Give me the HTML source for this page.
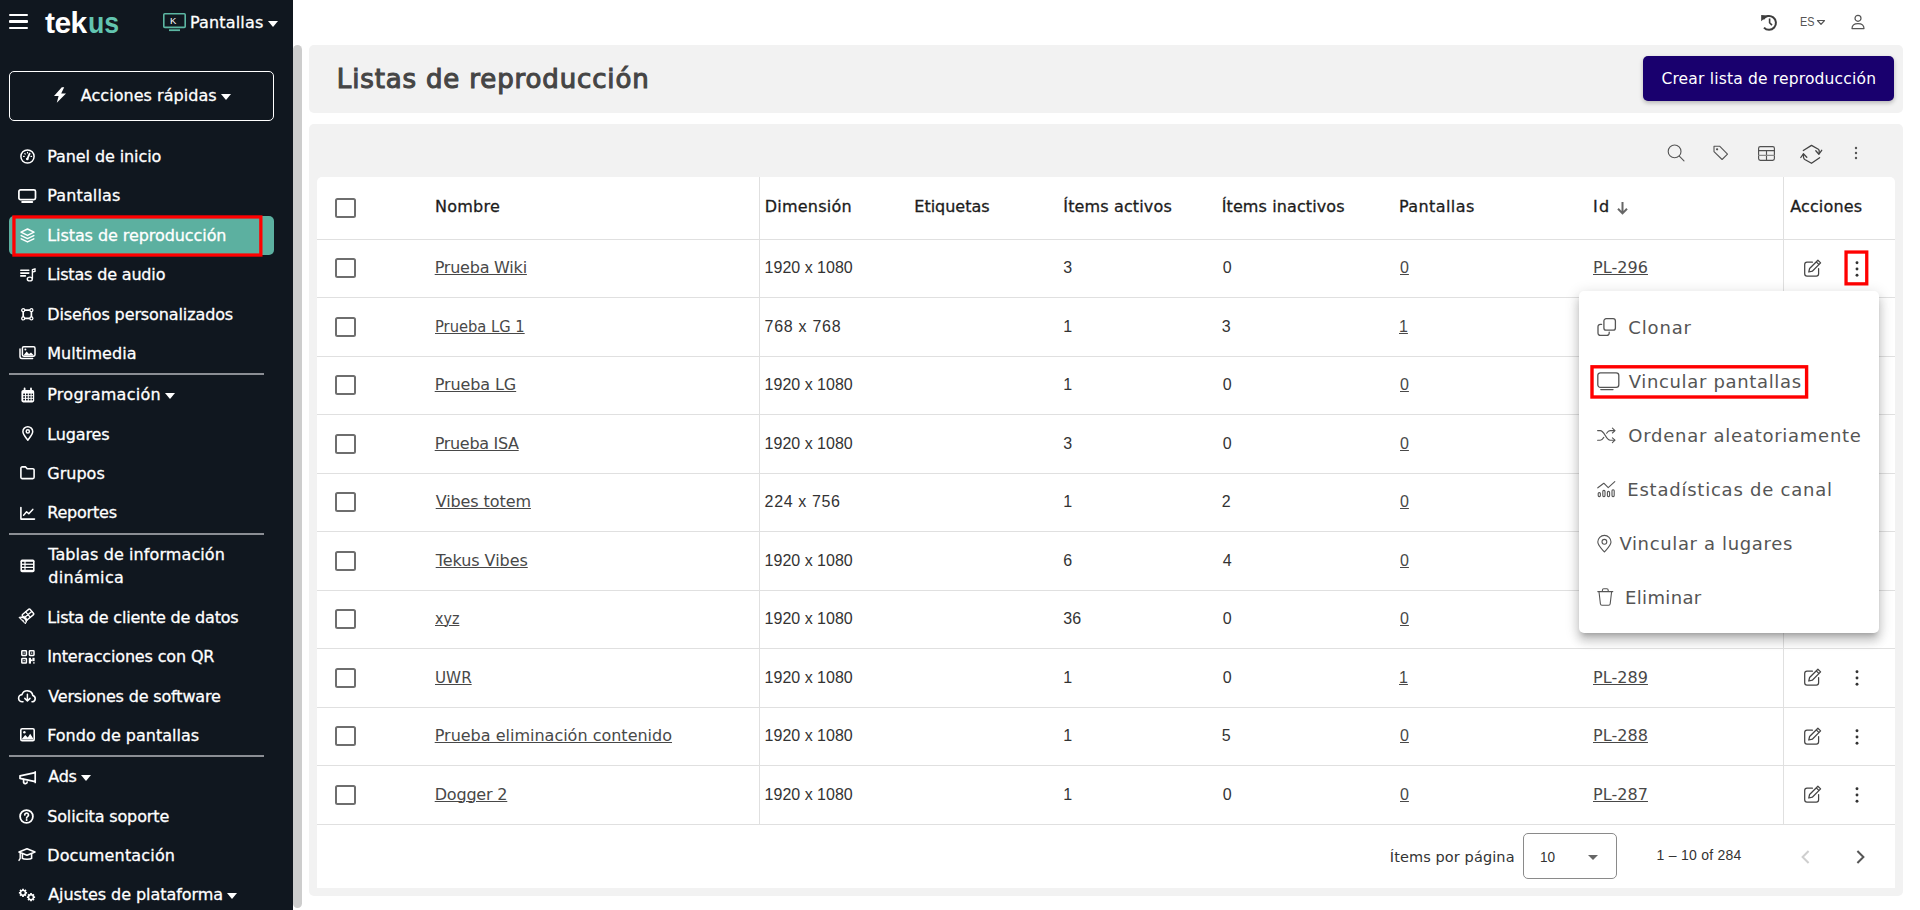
<!DOCTYPE html>
<html lang="es"><head><meta charset="utf-8"><title>Listas de reproducción</title><style>
*{box-sizing:border-box}
html,body{margin:0;padding:0}
body{width:1920px;height:910px;overflow:hidden;position:relative;background:#fff;font-family:'Liberation Sans',sans-serif}
.a{position:absolute}
.t{position:absolute;line-height:1;white-space:pre}
.u{text-decoration:underline;text-decoration-thickness:1px;text-underline-offset:1px}
.sep{position:absolute;left:9px;width:255px;height:2px;background:#8b8e94}
.hl{position:absolute;left:317px;width:1578px;height:1px;background:#e0e0e0}
.cb{position:absolute;left:335px;width:21px;height:20px;border:2px solid #6e6e6e;border-radius:2.5px;background:#fff}
svg{position:absolute;overflow:visible}
.si{fill:none;stroke:#fff;stroke-width:1.5;stroke-linecap:round;stroke-linejoin:round}
.gi{fill:none;stroke:#555;stroke-width:1.1;stroke-linecap:round;stroke-linejoin:round}
</style></head><body>
<div class="a" style="left:0;top:0;width:293px;height:910px;background:#10171f"></div>
<div class="a" style="left:293px;top:45px;width:9px;height:863px;background:#cdcdcd;border-radius:4.5px"></div>
<div class="a" style="left:9px;top:13.6px;width:19px;height:2.4px;background:#fff;border-radius:1px"></div>
<div class="a" style="left:9px;top:20.4px;width:19px;height:2.4px;background:#fff;border-radius:1px"></div>
<div class="a" style="left:9px;top:27.0px;width:19px;height:2.4px;background:#fff;border-radius:1px"></div>
<span class="t" style="left:45.0px;top:8.3px;font-family:'Liberation Sans',sans-serif;font-size:30px;color:#ffffff;font-weight:bold;letter-spacing:-0.55px;">tek</span>
<span class="t" style="left:88px;top:7.6px;font-family:'Liberation Sans',sans-serif;font-weight:bold;font-size:30px;color:#62c5b0;transform:scaleX(.89);transform-origin:0 0">us</span>
<span class="t" style="left:170.0px;top:15.5px;font-family:'Liberation Sans',sans-serif;font-size:9.5px;color:#ffffff;">K</span>
<svg style="left:163px;top:12.5px;fill:none;stroke:#5cb6a2;stroke-width:1.6" width="23" height="18" viewBox="0 0 23 18"><rect x=".8" y=".8" width="21.4" height="13.6" rx="1"/><path d="M6 17.2h11" stroke-width="1.8"/></svg>
<div class="a" style="left:267.6px;top:20.8px;width:0;height:0;border-left:5.2px solid transparent;border-right:5.2px solid transparent;border-top:6px solid #fff"></div>
<div class="a" style="left:9px;top:71px;width:265px;height:50px;border:1px solid #fff;border-radius:5px"></div>
<svg style="left:53px;top:87px;fill:#fff" width="14" height="16" viewBox="0 0 14 16"><path d="M8.800.2 1 9h4.600L3.800 15.800 13 6.600H8.200L11.200.2z"/></svg>
<div class="a" style="left:221.4px;top:93.6px;width:0;height:0;border-left:5.2px solid transparent;border-right:5.2px solid transparent;border-top:6px solid #fff"></div>
<div class="a" style="left:164.8px;top:393.1px;width:0;height:0;border-left:5.2px solid transparent;border-right:5.2px solid transparent;border-top:6px solid #fff"></div>
<div class="a" style="left:81.3px;top:775px;width:0;height:0;border-left:5.2px solid transparent;border-right:5.2px solid transparent;border-top:6px solid #fff"></div>
<div class="a" style="left:227px;top:892.7px;width:0;height:0;border-left:5.2px solid transparent;border-right:5.2px solid transparent;border-top:6px solid #fff"></div>
<div class="a" style="left:9px;top:215.5px;width:265px;height:39.5px;background:#5cb0a0;border-radius:5px"></div>
<svg style="left:0;top:0;pointer-events:none" width="1920" height="910"><rect x="13.95" y="216.95" width="246.90" height="38.10" fill="none" stroke="#ff0000" stroke-width="3.3"/></svg>
<div class="sep" style="top:373px"></div>
<div class="sep" style="top:533px"></div>
<div class="sep" style="top:755px"></div>
<svg class="si" style="left:19.5px;top:148.5px;" width="15" height="15" viewBox="0 0 15 15"><circle cx="7.5" cy="7.5" r="6.600"/><path d="M7.400 9.800 9.600 4.600" stroke-width="1.800"/><circle cx="7.300" cy="10" r="1.300" fill="#fff" stroke="none"/><path d="M3.600 7.400h.6M4.800 4.600l.4.400M7.500 3.400v.6M11 7.400h.6" stroke-width="1.200"/></svg>
<svg class="si" style="left:18px;top:189px;" width="19" height="14" viewBox="0 0 19 14"><rect x=".9" y=".9" width="16.600" height="9.800" rx="1.600" stroke-width="1.700"/><path d="M4.200 13h10" stroke-width="2"/></svg>
<svg class="si" style="left:19.5px;top:228px;" width="15" height="15" viewBox="0 0 15 15"><path d="M7.500 1 14 4.200 7.500 7.400 1 4.200z"/><path d="M1.200 7.600 7.500 10.700 13.800 7.600M1.200 10.800 7.500 13.900 13.800 10.800"/></svg>
<svg class="si" style="left:19.5px;top:268px;" width="16" height="14" viewBox="0 0 16 14"><path d="M.8 2.300h8M.8 5.100h8M.8 7.900h4.600" stroke-width="1.600"/><path d="M12.400 10.600V1.600l2.600-.8v2.600l-2.600.8" stroke-width="1.400"/><ellipse cx="9.800" cy="11" rx="2.500" ry="1.900" stroke-width="1.400"/></svg>
<svg class="si" style="left:21px;top:307.6px;" width="13" height="13" viewBox="0 0 13 13"><rect x="2.200" y="2.200" width="8.200" height="8.200" stroke-width="1.700"/><circle cx="2.200" cy="2.200" r="1.500" fill="#10171f" stroke-width="1.300"/><circle cx="10.400" cy="2.200" r="1.500" fill="#10171f" stroke-width="1.300"/><circle cx="2.200" cy="10.400" r="1.500" fill="#10171f" stroke-width="1.300"/><circle cx="10.400" cy="10.400" r="1.500" fill="#10171f" stroke-width="1.300"/></svg>
<svg class="si" style="left:19px;top:346px;" width="17" height="14" viewBox="0 0 17 14"><rect x="3.400" y=".8" width="12.600" height="9.400" rx="1.400"/><path d="M1 3v7.600a1.800 1.800 0 0 0 1.800 1.800h10.800"/><path d="M4.400 9.400 7.600 5.600l2.400 2.400 2-1.600 3 3z" fill="#fff" stroke="none"/><circle cx="6.400" cy="3.600" r="1" fill="#fff" stroke="none"/></svg>
<svg class="si" style="left:20.5px;top:387.5px;" width="14" height="15" viewBox="0 0 14 15"><path d="M3.600.4v2.400M10 .4v2.400" stroke-width="1.800"/><rect x=".4" y="2" width="12.800" height="12.400" rx="1.800" fill="#fff" stroke="none"/><g fill="#10171f" stroke="none"><rect x="2.200" y="5.600" width="1.800" height="1.600"/><rect x="5" y="5.600" width="1.800" height="1.600"/><rect x="7.800" y="5.600" width="1.800" height="1.600"/><rect x="10.600" y="5.600" width="1.400" height="1.600"/><rect x="2.200" y="8.200" width="1.800" height="1.600"/><rect x="5" y="8.200" width="1.800" height="1.600"/><rect x="7.800" y="8.200" width="1.800" height="1.600"/><rect x="10.600" y="8.200" width="1.400" height="1.600"/><rect x="2.200" y="10.800" width="1.800" height="1.600"/><rect x="5" y="10.800" width="1.800" height="1.600"/><rect x="7.800" y="10.800" width="1.800" height="1.600"/><rect x="10.600" y="10.800" width="1.400" height="1.600"/></g></svg>
<svg class="si" style="left:21.5px;top:426.3px;" width="12" height="15" viewBox="0 0 12 15"><path d="M5.800 14.200C4 11.800.9 8.600.9 5.600a4.900 4.900 0 0 1 9.800 0c0 3-3.100 6.200-4.900 8.600z"/><circle cx="5.800" cy="5.400" r="1.600"/></svg>
<svg class="si" style="left:19.5px;top:465.8px;" width="15" height="14" viewBox="0 0 15 14"><path d="M.9 2.200A1.300 1.300 0 0 1 2.200.9h3.400l1.600 1.900h5.600a1.300 1.300 0 0 1 1.300 1.300v7.200a1.300 1.300 0 0 1-1.300 1.300H2.200A1.300 1.300 0 0 1 .9 11.300z" stroke-width="1.600"/></svg>
<svg class="si" style="left:19.5px;top:506.5px;" width="15" height="13" viewBox="0 0 15 13"><path d="M.9.600v11.500h13.600" stroke-width="1.600"/><path d="M3.600 8.200 6.600 4.800l2.200 2 4-4.400" stroke-width="1.500"/></svg>
<svg class="si" style="left:19.5px;top:558.8px;" width="15" height="14" viewBox="0 0 15 14"><rect x=".4" y=".4" width="14.200" height="12.800" rx="1.800" fill="#fff" stroke="none"/><g fill="#10171f" stroke="none"><rect x="2" y="2.800" width="2.400" height="1.800"/><rect x="5.600" y="2.800" width="7.400" height="1.800"/><rect x="2" y="5.900" width="2.400" height="1.800"/><rect x="5.600" y="5.900" width="7.400" height="1.800"/><rect x="2" y="9" width="2.400" height="1.800"/><rect x="5.600" y="9" width="7.400" height="1.800"/></g></svg>
<svg class="si" style="left:18.2px;top:608.7px;" width="16" height="16" viewBox="0 0 16 16"><g transform="rotate(-40 10 5.600)"><rect x="5" y="2" width="10" height="7.200" rx=".8" stroke-width="1.400"/><path d="M10 2v7.200M5 5.600h10" stroke-width="1.300"/></g><path d="M6.200 7.400 1 8.400 7.400 14.800 9.400 10.600z" fill="#fff" stroke-width="1"/><path d="M3.800 9.600Q6.600 10.200 7 12.800" stroke="#10171f" stroke-width="1.200"/></svg>
<svg class="si" style="left:20.5px;top:649.5px;" width="14" height="14" viewBox="0 0 14 14"><rect x=".8" y=".8" width="4.600" height="4.600" rx=".6"/><rect x="8.400" y=".8" width="4.600" height="4.600" rx=".6"/><rect x=".8" y="8.400" width="4.600" height="4.600" rx=".6"/><g fill="#fff" stroke="none"><rect x="2.500" y="2.500" width="1.200" height="1.200"/><rect x="10.100" y="2.500" width="1.200" height="1.200"/><rect x="2.500" y="10.100" width="1.200" height="1.200"/><rect x="7.800" y="7.800" width="2.200" height="5.800"/><rect x="11.400" y="7.800" width="2.200" height="3.400"/><rect x="10" y="9.400" width="1.400" height="1.800"/><rect x="12.200" y="12.200" width="1.400" height="1.400"/></g></svg>
<svg class="si" style="left:17.8px;top:688.6px;" width="19" height="14" viewBox="0 0 19 14"><path d="M5 12.800h-.6a3.600 3.600 0 0 1-.4-7.200 5.600 5.600 0 0 1 10.800.8 3.300 3.300 0 0 1-.2 6.400H14" stroke-width="1.600"/><path d="M9.400 5.200v6.600M6.800 9.400l2.600 2.600 2.600-2.600" stroke-width="1.500"/></svg>
<svg class="si" style="left:19.5px;top:727.8px;" width="15" height="14" viewBox="0 0 15 14"><rect x=".8" y=".8" width="13.400" height="11.800" rx="1.400" stroke-width="1.600"/><path d="M1.400 11.600 5.200 7l2.600 2.400 2.400-3.600 3.600 5.800z" fill="#fff" stroke="none"/><circle cx="4.400" cy="4.200" r="1.200" fill="#fff" stroke="none"/></svg>
<svg class="si" style="left:18.8px;top:770.5px;" width="18" height="13" viewBox="0 0 18 13"><path d="M16.200.800v10.600M16.200 1.600 1 4.800v2.600l15.200 3.200" stroke-width="1.700"/><path d="M4.600 8.400v2.200a1.800 1.800 0 0 0 3.600.400" stroke-width="1.700"/></svg>
<svg class="si" style="left:19.3px;top:808.8px;" width="15" height="15" viewBox="0 0 15 15"><circle cx="7.500" cy="7.500" r="6.400" stroke-width="1.800"/><path d="M5.700 6a1.900 1.900 0 1 1 2.800 1.600c-.6.400-.9.700-.9 1.400" stroke-width="1.700"/><circle cx="7.600" cy="10.900" r="1" fill="#fff" stroke="none"/></svg>
<svg class="si" style="left:18px;top:848.3px;" width="18" height="13" viewBox="0 0 18 13"><path d="M9 .800 17 4 9 7.200 1 4z" stroke-width="1.600"/><path d="M4.400 5.800v4.600c1.400 1.200 7.800 1.200 9.200 0V5.800" stroke-width="1.600"/><path d="M2.200 4.800v5.600L1 12.400" stroke-width="1.400"/></svg>
<svg class="si" style="left:18px;top:888.4px;" width="18" height="14" viewBox="0 0 18 14"><circle cx="5" cy="4.8" r="2.4" stroke-width="1.400"/><path d="M7.40 4.80L9.10 4.80" stroke-width="1.800" stroke-linecap="butt"/><path d="M6.70 6.50L7.90 7.70" stroke-width="1.800" stroke-linecap="butt"/><path d="M5.00 7.20L5.00 8.90" stroke-width="1.800" stroke-linecap="butt"/><path d="M3.30 6.50L2.10 7.70" stroke-width="1.800" stroke-linecap="butt"/><path d="M2.60 4.80L0.90 4.80" stroke-width="1.800" stroke-linecap="butt"/><path d="M3.30 3.10L2.10 1.90" stroke-width="1.800" stroke-linecap="butt"/><path d="M5.00 2.40L5.00 0.70" stroke-width="1.800" stroke-linecap="butt"/><path d="M6.70 3.10L7.90 1.90" stroke-width="1.800" stroke-linecap="butt"/><circle cx="13" cy="9.2" r="2.4" stroke-width="1.400"/><path d="M15.40 9.20L17.10 9.20" stroke-width="1.800" stroke-linecap="butt"/><path d="M14.70 10.90L15.90 12.10" stroke-width="1.800" stroke-linecap="butt"/><path d="M13.00 11.60L13.00 13.30" stroke-width="1.800" stroke-linecap="butt"/><path d="M11.30 10.90L10.10 12.10" stroke-width="1.800" stroke-linecap="butt"/><path d="M10.60 9.20L8.90 9.20" stroke-width="1.800" stroke-linecap="butt"/><path d="M11.30 7.50L10.10 6.30" stroke-width="1.800" stroke-linecap="butt"/><path d="M13.00 6.80L13.00 5.10" stroke-width="1.800" stroke-linecap="butt"/><path d="M14.70 7.50L15.90 6.30" stroke-width="1.800" stroke-linecap="butt"/></svg>
<span class="t" style="left:190.0px;top:15.1px;font-family:'DejaVu Sans','Liberation Sans',sans-serif;font-size:16px;color:#ffffff;letter-spacing:0.16px;-webkit-text-stroke:0.3px #ffffff;">Pantallas</span><span class="t" style="left:80.8px;top:87.8px;font-family:'DejaVu Sans','Liberation Sans',sans-serif;font-size:16px;color:#ffffff;letter-spacing:0.04px;-webkit-text-stroke:0.3px #ffffff;">Acciones rápidas</span><span class="t" style="left:47.2px;top:149.0px;font-family:'DejaVu Sans','Liberation Sans',sans-serif;font-size:16px;color:#ffffff;letter-spacing:-0.09px;-webkit-text-stroke:0.3px #ffffff;">Panel de inicio</span><span class="t" style="left:47.2px;top:188.0px;font-family:'DejaVu Sans','Liberation Sans',sans-serif;font-size:16px;color:#ffffff;letter-spacing:0.14px;-webkit-text-stroke:0.3px #ffffff;">Pantallas</span><span class="t" style="left:47.2px;top:228.0px;font-family:'DejaVu Sans','Liberation Sans',sans-serif;font-size:16px;color:#ffffff;letter-spacing:-0.07px;-webkit-text-stroke:0.3px #ffffff;">Listas de reproducción</span><span class="t" style="left:47.2px;top:267.0px;font-family:'DejaVu Sans','Liberation Sans',sans-serif;font-size:16px;color:#ffffff;letter-spacing:-0.17px;-webkit-text-stroke:0.3px #ffffff;">Listas de audio</span><span class="t" style="left:47.2px;top:306.8px;font-family:'DejaVu Sans','Liberation Sans',sans-serif;font-size:16px;color:#ffffff;letter-spacing:-0.11px;-webkit-text-stroke:0.3px #ffffff;">Diseños personalizados</span><span class="t" style="left:47.2px;top:345.9px;font-family:'DejaVu Sans','Liberation Sans',sans-serif;font-size:16px;color:#ffffff;letter-spacing:0.04px;-webkit-text-stroke:0.3px #ffffff;">Multimedia</span><span class="t" style="left:47.2px;top:387.0px;font-family:'DejaVu Sans','Liberation Sans',sans-serif;font-size:16px;color:#ffffff;letter-spacing:0.27px;-webkit-text-stroke:0.3px #ffffff;">Programación</span><span class="t" style="left:47.2px;top:426.6px;font-family:'DejaVu Sans','Liberation Sans',sans-serif;font-size:16px;color:#ffffff;letter-spacing:-0.13px;-webkit-text-stroke:0.3px #ffffff;">Lugares</span><span class="t" style="left:47.2px;top:465.9px;font-family:'DejaVu Sans','Liberation Sans',sans-serif;font-size:16px;color:#ffffff;letter-spacing:0.04px;-webkit-text-stroke:0.3px #ffffff;">Grupos</span><span class="t" style="left:47.2px;top:505.4px;font-family:'DejaVu Sans','Liberation Sans',sans-serif;font-size:16px;color:#ffffff;letter-spacing:-0.19px;-webkit-text-stroke:0.3px #ffffff;">Reportes</span><span class="t" style="left:48.2px;top:546.5px;font-family:'DejaVu Sans','Liberation Sans',sans-serif;font-size:16px;color:#ffffff;letter-spacing:0.10px;-webkit-text-stroke:0.3px #ffffff;">Tablas de información</span><span class="t" style="left:48.2px;top:569.5px;font-family:'DejaVu Sans','Liberation Sans',sans-serif;font-size:16px;color:#ffffff;letter-spacing:0.36px;-webkit-text-stroke:0.3px #ffffff;">dinámica</span><span class="t" style="left:47.2px;top:610.0px;font-family:'DejaVu Sans','Liberation Sans',sans-serif;font-size:16px;color:#ffffff;letter-spacing:-0.20px;-webkit-text-stroke:0.3px #ffffff;">Lista de cliente de datos</span><span class="t" style="left:47.2px;top:649.2px;font-family:'DejaVu Sans','Liberation Sans',sans-serif;font-size:16px;color:#ffffff;letter-spacing:-0.15px;-webkit-text-stroke:0.3px #ffffff;">Interacciones con QR</span><span class="t" style="left:48.2px;top:689.0px;font-family:'DejaVu Sans','Liberation Sans',sans-serif;font-size:16px;color:#ffffff;letter-spacing:-0.16px;-webkit-text-stroke:0.3px #ffffff;">Versiones de software</span><span class="t" style="left:47.2px;top:728.1px;font-family:'DejaVu Sans','Liberation Sans',sans-serif;font-size:16px;color:#ffffff;-webkit-text-stroke:0.3px #ffffff;">Fondo de pantallas</span><span class="t" style="left:48.2px;top:769.0px;font-family:'DejaVu Sans','Liberation Sans',sans-serif;font-size:16px;color:#ffffff;letter-spacing:-0.20px;-webkit-text-stroke:0.3px #ffffff;">Ads</span><span class="t" style="left:47.2px;top:808.7px;font-family:'DejaVu Sans','Liberation Sans',sans-serif;font-size:16px;color:#ffffff;letter-spacing:-0.13px;-webkit-text-stroke:0.3px #ffffff;">Solicita soporte</span><span class="t" style="left:47.2px;top:847.8px;font-family:'DejaVu Sans','Liberation Sans',sans-serif;font-size:16px;color:#ffffff;letter-spacing:0.16px;-webkit-text-stroke:0.3px #ffffff;">Documentación</span><span class="t" style="left:48.2px;top:887.0px;font-family:'DejaVu Sans','Liberation Sans',sans-serif;font-size:16px;color:#ffffff;letter-spacing:-0.06px;-webkit-text-stroke:0.3px #ffffff;">Ajustes de plataforma</span>
<div class="a" style="left:309px;top:45px;width:1594px;height:68px;background:#f2f2f2;border-radius:5px"></div>
<div class="a" style="left:309px;top:124px;width:1594px;height:772px;background:#f2f2f2;border-radius:5px"></div>
<div class="a" style="left:317px;top:177px;width:1578px;height:711px;background:#fff;border-radius:5px 5px 0 0"></div>
<div class="a" style="left:1643px;top:56px;width:251px;height:45px;background:#19006e;border-radius:5px;box-shadow:0 2px 4px rgba(0,0,0,.25)"></div>
<div class="hl" style="top:239px"></div>
<div class="hl" style="top:297px"></div>
<div class="hl" style="top:356px"></div>
<div class="hl" style="top:414px"></div>
<div class="hl" style="top:473px"></div>
<div class="hl" style="top:531px"></div>
<div class="hl" style="top:590px"></div>
<div class="hl" style="top:648px"></div>
<div class="hl" style="top:707px"></div>
<div class="hl" style="top:765px"></div>
<div class="hl" style="top:824px"></div>
<div class="a" style="left:759px;top:177px;width:1px;height:648px;background:#e0e0e0"></div>
<div class="a" style="left:1783px;top:177px;width:1px;height:648px;background:#e0e0e0"></div>
<div class="cb" style="top:198px"></div>
<div class="cb" style="top:258.0px"></div>
<div class="cb" style="top:316.5px"></div>
<div class="cb" style="top:375.0px"></div>
<div class="cb" style="top:433.5px"></div>
<div class="cb" style="top:492.0px"></div>
<div class="cb" style="top:550.5px"></div>
<div class="cb" style="top:609.0px"></div>
<div class="cb" style="top:667.5px"></div>
<div class="cb" style="top:726.0px"></div>
<div class="cb" style="top:784.5px"></div>
<svg class="gi" style="left:1803.5px;top:258.8px;stroke-width:1.25;stroke:#444" width="18" height="18" viewBox="0 0 18 18"><path d="M8.4 3.2H3a2.300 2.300 0 0 0-2.300 2.300v9.300A2.300 2.300 0 0 0 3 17.100h9.300a2.300 2.300 0 0 0 2.300-2.300V9.600"/><path d="M13.900 1.200l2.700 2.700-8.300 8.300-3.500.8.800-3.500zM12.300 2.900l2.700 2.700"/></svg>
<svg style="left:1853.9px;top:258.5px;fill:#333" width="6" height="20" viewBox="0 0 6 20"><circle cx="3" cy="3.8" r="1.45"/><circle cx="3" cy="10" r="1.45"/><circle cx="3" cy="16.2" r="1.45"/></svg>
<svg class="gi" style="left:1803.5px;top:317.3px;stroke-width:1.25;stroke:#444" width="18" height="18" viewBox="0 0 18 18"><path d="M8.4 3.2H3a2.300 2.300 0 0 0-2.300 2.300v9.300A2.300 2.300 0 0 0 3 17.100h9.300a2.300 2.300 0 0 0 2.300-2.300V9.600"/><path d="M13.900 1.200l2.700 2.700-8.300 8.300-3.500.8.800-3.500zM12.300 2.900l2.700 2.700"/></svg>
<svg style="left:1853.9px;top:317.0px;fill:#333" width="6" height="20" viewBox="0 0 6 20"><circle cx="3" cy="3.8" r="1.45"/><circle cx="3" cy="10" r="1.45"/><circle cx="3" cy="16.2" r="1.45"/></svg>
<svg class="gi" style="left:1803.5px;top:375.8px;stroke-width:1.25;stroke:#444" width="18" height="18" viewBox="0 0 18 18"><path d="M8.4 3.2H3a2.300 2.300 0 0 0-2.300 2.300v9.300A2.300 2.300 0 0 0 3 17.100h9.300a2.300 2.300 0 0 0 2.300-2.300V9.600"/><path d="M13.900 1.200l2.700 2.700-8.300 8.300-3.500.8.800-3.500zM12.300 2.900l2.700 2.700"/></svg>
<svg style="left:1853.9px;top:375.5px;fill:#333" width="6" height="20" viewBox="0 0 6 20"><circle cx="3" cy="3.8" r="1.45"/><circle cx="3" cy="10" r="1.45"/><circle cx="3" cy="16.2" r="1.45"/></svg>
<svg class="gi" style="left:1803.5px;top:434.3px;stroke-width:1.25;stroke:#444" width="18" height="18" viewBox="0 0 18 18"><path d="M8.4 3.2H3a2.300 2.300 0 0 0-2.300 2.300v9.300A2.300 2.300 0 0 0 3 17.100h9.300a2.300 2.300 0 0 0 2.300-2.300V9.600"/><path d="M13.900 1.200l2.700 2.700-8.300 8.300-3.500.8.800-3.500zM12.300 2.900l2.700 2.700"/></svg>
<svg style="left:1853.9px;top:434.0px;fill:#333" width="6" height="20" viewBox="0 0 6 20"><circle cx="3" cy="3.8" r="1.45"/><circle cx="3" cy="10" r="1.45"/><circle cx="3" cy="16.2" r="1.45"/></svg>
<svg class="gi" style="left:1803.5px;top:492.8px;stroke-width:1.25;stroke:#444" width="18" height="18" viewBox="0 0 18 18"><path d="M8.4 3.2H3a2.300 2.300 0 0 0-2.300 2.300v9.300A2.300 2.300 0 0 0 3 17.100h9.300a2.300 2.300 0 0 0 2.300-2.300V9.600"/><path d="M13.900 1.200l2.700 2.700-8.300 8.300-3.500.8.800-3.500zM12.300 2.900l2.700 2.700"/></svg>
<svg style="left:1853.9px;top:492.5px;fill:#333" width="6" height="20" viewBox="0 0 6 20"><circle cx="3" cy="3.8" r="1.45"/><circle cx="3" cy="10" r="1.45"/><circle cx="3" cy="16.2" r="1.45"/></svg>
<svg class="gi" style="left:1803.5px;top:551.3px;stroke-width:1.25;stroke:#444" width="18" height="18" viewBox="0 0 18 18"><path d="M8.4 3.2H3a2.300 2.300 0 0 0-2.300 2.300v9.300A2.300 2.300 0 0 0 3 17.100h9.300a2.300 2.300 0 0 0 2.300-2.300V9.600"/><path d="M13.900 1.200l2.700 2.700-8.300 8.300-3.500.8.800-3.500zM12.300 2.900l2.700 2.700"/></svg>
<svg style="left:1853.9px;top:551.0px;fill:#333" width="6" height="20" viewBox="0 0 6 20"><circle cx="3" cy="3.8" r="1.45"/><circle cx="3" cy="10" r="1.45"/><circle cx="3" cy="16.2" r="1.45"/></svg>
<svg class="gi" style="left:1803.5px;top:609.8px;stroke-width:1.25;stroke:#444" width="18" height="18" viewBox="0 0 18 18"><path d="M8.4 3.2H3a2.300 2.300 0 0 0-2.300 2.300v9.300A2.300 2.300 0 0 0 3 17.100h9.300a2.300 2.300 0 0 0 2.300-2.300V9.600"/><path d="M13.900 1.200l2.700 2.700-8.300 8.300-3.500.8.800-3.500zM12.300 2.900l2.700 2.700"/></svg>
<svg style="left:1853.9px;top:609.5px;fill:#333" width="6" height="20" viewBox="0 0 6 20"><circle cx="3" cy="3.8" r="1.45"/><circle cx="3" cy="10" r="1.45"/><circle cx="3" cy="16.2" r="1.45"/></svg>
<svg class="gi" style="left:1803.5px;top:668.3px;stroke-width:1.25;stroke:#444" width="18" height="18" viewBox="0 0 18 18"><path d="M8.4 3.2H3a2.300 2.300 0 0 0-2.300 2.300v9.300A2.300 2.300 0 0 0 3 17.100h9.300a2.300 2.300 0 0 0 2.300-2.300V9.600"/><path d="M13.900 1.200l2.700 2.700-8.300 8.300-3.500.8.800-3.500zM12.300 2.900l2.700 2.700"/></svg>
<svg style="left:1853.9px;top:668.0px;fill:#333" width="6" height="20" viewBox="0 0 6 20"><circle cx="3" cy="3.8" r="1.45"/><circle cx="3" cy="10" r="1.45"/><circle cx="3" cy="16.2" r="1.45"/></svg>
<svg class="gi" style="left:1803.5px;top:726.8px;stroke-width:1.25;stroke:#444" width="18" height="18" viewBox="0 0 18 18"><path d="M8.4 3.2H3a2.300 2.300 0 0 0-2.300 2.300v9.300A2.300 2.300 0 0 0 3 17.100h9.300a2.300 2.300 0 0 0 2.300-2.300V9.600"/><path d="M13.900 1.200l2.700 2.700-8.300 8.300-3.500.8.800-3.500zM12.300 2.900l2.700 2.700"/></svg>
<svg style="left:1853.9px;top:726.5px;fill:#333" width="6" height="20" viewBox="0 0 6 20"><circle cx="3" cy="3.8" r="1.45"/><circle cx="3" cy="10" r="1.45"/><circle cx="3" cy="16.2" r="1.45"/></svg>
<svg class="gi" style="left:1803.5px;top:785.3px;stroke-width:1.25;stroke:#444" width="18" height="18" viewBox="0 0 18 18"><path d="M8.4 3.2H3a2.300 2.300 0 0 0-2.300 2.300v9.300A2.300 2.300 0 0 0 3 17.100h9.300a2.300 2.300 0 0 0 2.300-2.300V9.600"/><path d="M13.900 1.200l2.700 2.700-8.300 8.300-3.500.8.800-3.500zM12.300 2.900l2.700 2.700"/></svg>
<svg style="left:1853.9px;top:785.0px;fill:#333" width="6" height="20" viewBox="0 0 6 20"><circle cx="3" cy="3.8" r="1.45"/><circle cx="3" cy="10" r="1.45"/><circle cx="3" cy="16.2" r="1.45"/></svg>
<svg style="left:0;top:0;pointer-events:none" width="1920" height="910"><rect x="1846.05" y="252.05" width="20.70" height="31.80" fill="none" stroke="#ff0000" stroke-width="3.3"/></svg>
<svg class="gi" style="left:1667px;top:144px" width="18" height="18" viewBox="0 0 18 18"><circle cx="7.6" cy="7.4" r="6.4"/><path d="M12.3 12.1l4.7 4.7"/></svg>
<svg class="gi" style="left:1713px;top:145px" width="16" height="16" viewBox="0 0 16 16"><path d="M1 1.2h5.6l7.9 7.9-5.4 5.4L1 6.6z"/><circle cx="4.1" cy="4.3" r=".6" fill="#555"/></svg>
<svg class="gi" style="left:1757.500px;top:145.600px;stroke-width:1.15;stroke:#505050" width="18" height="16" viewBox="0 0 18 16"><rect x=".6" y=".6" width="15.800" height="13.700" rx="1.700"/><path d="M.6 4.600h15.800M8.500 4.600v9.700"/><path d="M.6 9.300h15.800" stroke="#8a8a8a"/></svg>
<svg class="gi" style="left:1800px;top:144px;stroke-width:1.3;stroke:#444" width="23" height="21" viewBox="0 0 23 21"><path d="M3.3 6.5 11.5 1.4 18.4 5.2Q19.7 6 19 9.6"/><path d="M15.8 6.8 18.9 10.2 21.7 6.3"/><path d="M19.6 13.7 11.5 19.3 4.8 15.5Q3.200 14.500 3.400 10.200"/><path d="M.8 13.500 3.400 9.800 6.800 13.300"/></svg>
<svg style="left:1853.0px;top:143.1px;fill:#555" width="6" height="20" viewBox="0 0 6 20"><circle cx="3" cy="5" r="1.2"/><circle cx="3" cy="10" r="1.2"/><circle cx="3" cy="15" r="1.2"/></svg>
<svg style="left:1759px;top:13px;fill:none;stroke:#3d3d3d;stroke-width:2;stroke-linecap:butt" width="19" height="18" viewBox="0 0 19 18"><path d="M4.2 6.2A6.9 6.9 0 1 1 5 14.6"/><path d="M8.6 2.6 2.2 2v6.2z" fill="#3d3d3d" stroke="none"/><path d="M10.6 5.5v4.2l2.4 2.4" stroke-width="1.6"/></svg>
<svg class="gi" style="left:1817px;top:20px;stroke-width:1.2" width="8" height="5" viewBox="0 0 8 5"><path d="M.5.5h7L4 4.4z"/></svg>
<svg class="gi" style="left:1851px;top:14px;stroke-width:1.2" width="14" height="16" viewBox="0 0 14 16"><circle cx="7" cy="4.3" r="3"/><path d="M1 14.6c0-3.2 2.6-5 6-5s6 1.8 6 5z"/></svg>
<div class="a" style="left:1523px;top:833px;width:94px;height:46px;border:1px solid #8a8a8a;border-radius:5px"></div>
<div class="a" style="left:1588px;top:854.5px;width:0;height:0;border-left:5.7px solid transparent;border-right:5.7px solid transparent;border-top:5.7px solid #666"></div>
<svg style="left:1801px;top:850px;fill:none;stroke:#cfcfcf;stroke-width:2" width="9" height="14" viewBox="0 0 9 14"><path d="M7.6 1 1.6 7l6 6"/></svg>
<svg style="left:1856px;top:850px;fill:none;stroke:#555;stroke-width:2" width="9" height="14" viewBox="0 0 9 14"><path d="M1.4 1l6 6-6 6"/></svg>
<svg style="left:1617px;top:201.5px;fill:none;stroke:#666;stroke-width:2" width="11" height="13" viewBox="0 0 11 13"><path d="M5.5 0v11M1 6.8l4.5 4.6L10 6.8"/></svg>
<span class="t" style="left:1799.6px;top:14.8px;font-family:'Liberation Sans',sans-serif;font-size:13.4px;color:#555;transform:scaleX(0.812);transform-origin:0 0;">ES</span><span class="t" style="left:336.8px;top:66.2px;font-family:'DejaVu Sans','Liberation Sans',sans-serif;font-size:26px;color:#454545;letter-spacing:0.86px;-webkit-text-stroke:1.1px #454545;">Listas de reproducción</span><span class="t" style="left:1661.4px;top:72.2px;font-family:'DejaVu Sans','Liberation Sans',sans-serif;font-size:15.5px;color:#ffffff;letter-spacing:0.18px;">Crear lista de reproducción</span><span class="t" style="left:435.0px;top:199.0px;font-family:'DejaVu Sans','Liberation Sans',sans-serif;font-size:16px;color:#1c1c1c;letter-spacing:0.24px;-webkit-text-stroke:0.3px #1c1c1c;">Nombre</span><span class="t" style="left:764.8px;top:199.0px;font-family:'DejaVu Sans','Liberation Sans',sans-serif;font-size:16px;color:#1c1c1c;letter-spacing:0.21px;-webkit-text-stroke:0.3px #1c1c1c;">Dimensión</span><span class="t" style="left:914.3px;top:199.0px;font-family:'DejaVu Sans','Liberation Sans',sans-serif;font-size:16px;color:#1c1c1c;letter-spacing:-0.01px;-webkit-text-stroke:0.3px #1c1c1c;">Etiquetas</span><span class="t" style="left:1063.3px;top:199.0px;font-family:'DejaVu Sans','Liberation Sans',sans-serif;font-size:16px;color:#1c1c1c;letter-spacing:0.14px;-webkit-text-stroke:0.3px #1c1c1c;">Ítems activos</span><span class="t" style="left:1221.7px;top:199.0px;font-family:'DejaVu Sans','Liberation Sans',sans-serif;font-size:16px;color:#1c1c1c;letter-spacing:0.11px;-webkit-text-stroke:0.3px #1c1c1c;">Ítems inactivos</span><span class="t" style="left:1399.0px;top:199.0px;font-family:'DejaVu Sans','Liberation Sans',sans-serif;font-size:16px;color:#1c1c1c;letter-spacing:0.41px;-webkit-text-stroke:0.3px #1c1c1c;">Pantallas</span><span class="t" style="left:1593.0px;top:199.0px;font-family:'DejaVu Sans','Liberation Sans',sans-serif;font-size:16px;color:#1c1c1c;letter-spacing:1.20px;-webkit-text-stroke:0.3px #1c1c1c;">Id</span><span class="t" style="left:1790.2px;top:199.0px;font-family:'DejaVu Sans','Liberation Sans',sans-serif;font-size:16px;color:#1c1c1c;letter-spacing:0.14px;-webkit-text-stroke:0.3px #1c1c1c;">Acciones</span><span class="t u" style="left:434.7px;top:260.0px;font-family:'DejaVu Sans','Liberation Sans',sans-serif;font-size:16px;color:#484848;letter-spacing:-0.22px;">Prueba Wiki</span><span class="t" style="left:764.6px;top:260.0px;font-family:'Liberation Sans',sans-serif;font-size:16px;color:#333333;">1920 x 1080</span><span class="t" style="left:1063.3px;top:260.0px;font-family:'Liberation Sans',sans-serif;font-size:16px;color:#333333;">3</span><span class="t" style="left:1222.7px;top:260.0px;font-family:'Liberation Sans',sans-serif;font-size:16px;color:#333333;">0</span><span class="t u" style="left:1400.0px;top:260.0px;font-family:'Liberation Sans',sans-serif;font-size:16px;color:#484848;">0</span><span class="t u" style="left:1593.0px;top:260.0px;font-family:'DejaVu Sans','Liberation Sans',sans-serif;font-size:16px;color:#484848;letter-spacing:0.06px;">PL-296</span><span class="t u" style="left:434.8px;top:318.5px;font-family:'DejaVu Sans','Liberation Sans',sans-serif;font-size:16px;color:#484848;transform:scaleX(0.919);transform-origin:0 0;">Prueba LG 1</span><span class="t" style="left:764.6px;top:318.5px;font-family:'Liberation Sans',sans-serif;font-size:16px;color:#333333;letter-spacing:0.72px;">768 x 768</span><span class="t" style="left:1063.3px;top:318.5px;font-family:'Liberation Sans',sans-serif;font-size:16px;color:#333333;">1</span><span class="t" style="left:1221.7px;top:318.5px;font-family:'Liberation Sans',sans-serif;font-size:16px;color:#333333;">3</span><span class="t u" style="left:1399.0px;top:318.5px;font-family:'Liberation Sans',sans-serif;font-size:16px;color:#484848;">1</span><span class="t u" style="left:434.7px;top:377.0px;font-family:'DejaVu Sans','Liberation Sans',sans-serif;font-size:16px;color:#484848;letter-spacing:-0.09px;">Prueba LG</span><span class="t" style="left:764.6px;top:377.0px;font-family:'Liberation Sans',sans-serif;font-size:16px;color:#333333;">1920 x 1080</span><span class="t" style="left:1063.3px;top:377.0px;font-family:'Liberation Sans',sans-serif;font-size:16px;color:#333333;">1</span><span class="t" style="left:1222.7px;top:377.0px;font-family:'Liberation Sans',sans-serif;font-size:16px;color:#333333;">0</span><span class="t u" style="left:1400.0px;top:377.0px;font-family:'Liberation Sans',sans-serif;font-size:16px;color:#484848;">0</span><span class="t u" style="left:434.7px;top:435.5px;font-family:'DejaVu Sans','Liberation Sans',sans-serif;font-size:16px;color:#484848;letter-spacing:-0.31px;">Prueba ISA</span><span class="t" style="left:764.6px;top:435.5px;font-family:'Liberation Sans',sans-serif;font-size:16px;color:#333333;">1920 x 1080</span><span class="t" style="left:1063.3px;top:435.5px;font-family:'Liberation Sans',sans-serif;font-size:16px;color:#333333;">3</span><span class="t" style="left:1222.7px;top:435.5px;font-family:'Liberation Sans',sans-serif;font-size:16px;color:#333333;">0</span><span class="t u" style="left:1400.0px;top:435.5px;font-family:'Liberation Sans',sans-serif;font-size:16px;color:#484848;">0</span><span class="t u" style="left:435.7px;top:494.0px;font-family:'DejaVu Sans','Liberation Sans',sans-serif;font-size:16px;color:#484848;letter-spacing:-0.09px;">Vibes totem</span><span class="t" style="left:764.6px;top:494.0px;font-family:'Liberation Sans',sans-serif;font-size:16px;color:#333333;letter-spacing:0.64px;">224 x 756</span><span class="t" style="left:1063.3px;top:494.0px;font-family:'Liberation Sans',sans-serif;font-size:16px;color:#333333;">1</span><span class="t" style="left:1221.7px;top:494.0px;font-family:'Liberation Sans',sans-serif;font-size:16px;color:#333333;">2</span><span class="t u" style="left:1400.0px;top:494.0px;font-family:'Liberation Sans',sans-serif;font-size:16px;color:#484848;">0</span><span class="t u" style="left:435.7px;top:552.5px;font-family:'DejaVu Sans','Liberation Sans',sans-serif;font-size:16px;color:#484848;letter-spacing:-0.05px;">Tekus Vibes</span><span class="t" style="left:764.6px;top:552.5px;font-family:'Liberation Sans',sans-serif;font-size:16px;color:#333333;">1920 x 1080</span><span class="t" style="left:1063.3px;top:552.5px;font-family:'Liberation Sans',sans-serif;font-size:16px;color:#333333;">6</span><span class="t" style="left:1222.7px;top:552.5px;font-family:'Liberation Sans',sans-serif;font-size:16px;color:#333333;">4</span><span class="t u" style="left:1400.0px;top:552.5px;font-family:'Liberation Sans',sans-serif;font-size:16px;color:#484848;">0</span><span class="t u" style="left:434.8px;top:611.0px;font-family:'DejaVu Sans','Liberation Sans',sans-serif;font-size:16px;color:#484848;transform:scaleX(0.892);transform-origin:0 0;">xyz</span><span class="t" style="left:764.6px;top:611.0px;font-family:'Liberation Sans',sans-serif;font-size:16px;color:#333333;">1920 x 1080</span><span class="t" style="left:1063.3px;top:611.0px;font-family:'Liberation Sans',sans-serif;font-size:16px;color:#333333;">36</span><span class="t" style="left:1222.7px;top:611.0px;font-family:'Liberation Sans',sans-serif;font-size:16px;color:#333333;">0</span><span class="t u" style="left:1400.0px;top:611.0px;font-family:'Liberation Sans',sans-serif;font-size:16px;color:#484848;">0</span><span class="t u" style="left:434.8px;top:669.5px;font-family:'DejaVu Sans','Liberation Sans',sans-serif;font-size:16px;color:#484848;transform:scaleX(0.949);transform-origin:0 0;">UWR</span><span class="t" style="left:764.6px;top:669.5px;font-family:'Liberation Sans',sans-serif;font-size:16px;color:#333333;">1920 x 1080</span><span class="t" style="left:1063.3px;top:669.5px;font-family:'Liberation Sans',sans-serif;font-size:16px;color:#333333;">1</span><span class="t" style="left:1222.7px;top:669.5px;font-family:'Liberation Sans',sans-serif;font-size:16px;color:#333333;">0</span><span class="t u" style="left:1399.0px;top:669.5px;font-family:'Liberation Sans',sans-serif;font-size:16px;color:#484848;">1</span><span class="t u" style="left:1593.0px;top:669.5px;font-family:'DejaVu Sans','Liberation Sans',sans-serif;font-size:16px;color:#484848;letter-spacing:0.06px;">PL-289</span><span class="t u" style="left:434.7px;top:728.0px;font-family:'DejaVu Sans','Liberation Sans',sans-serif;font-size:16px;color:#484848;">Prueba eliminación contenido</span><span class="t" style="left:764.6px;top:728.0px;font-family:'Liberation Sans',sans-serif;font-size:16px;color:#333333;">1920 x 1080</span><span class="t" style="left:1063.3px;top:728.0px;font-family:'Liberation Sans',sans-serif;font-size:16px;color:#333333;">1</span><span class="t" style="left:1221.7px;top:728.0px;font-family:'Liberation Sans',sans-serif;font-size:16px;color:#333333;">5</span><span class="t u" style="left:1400.0px;top:728.0px;font-family:'Liberation Sans',sans-serif;font-size:16px;color:#484848;">0</span><span class="t u" style="left:1593.0px;top:728.0px;font-family:'DejaVu Sans','Liberation Sans',sans-serif;font-size:16px;color:#484848;letter-spacing:0.06px;">PL-288</span><span class="t u" style="left:434.7px;top:786.5px;font-family:'DejaVu Sans','Liberation Sans',sans-serif;font-size:16px;color:#484848;letter-spacing:-0.19px;">Dogger 2</span><span class="t" style="left:764.6px;top:786.5px;font-family:'Liberation Sans',sans-serif;font-size:16px;color:#333333;">1920 x 1080</span><span class="t" style="left:1063.3px;top:786.5px;font-family:'Liberation Sans',sans-serif;font-size:16px;color:#333333;">1</span><span class="t" style="left:1222.7px;top:786.5px;font-family:'Liberation Sans',sans-serif;font-size:16px;color:#333333;">0</span><span class="t u" style="left:1400.0px;top:786.5px;font-family:'Liberation Sans',sans-serif;font-size:16px;color:#484848;">0</span><span class="t u" style="left:1593.0px;top:786.5px;font-family:'DejaVu Sans','Liberation Sans',sans-serif;font-size:16px;color:#484848;letter-spacing:0.06px;">PL-287</span><span class="t" style="left:1389.8px;top:849.6px;font-family:'DejaVu Sans','Liberation Sans',sans-serif;font-size:14.5px;color:#333;letter-spacing:0.10px;">Ítems por página</span><span class="t" style="left:1540.3px;top:848.6px;font-family:'Liberation Sans',sans-serif;font-size:15.5px;color:#333;transform:scaleX(0.875);transform-origin:0 0;">10</span><span class="t" style="left:1656.6px;top:848.2px;font-family:'Liberation Sans',sans-serif;font-size:14px;color:#333;letter-spacing:0.25px;">1 – 10 of 284</span>
<div class="a" style="left:1579px;top:291px;width:300px;height:341.5px;background:#fff;border-radius:5px;box-shadow:0 5px 5px -3px rgba(0,0,0,.2),0 8px 10px 1px rgba(0,0,0,.14),0 3px 14px 2px rgba(0,0,0,.12)"></div>
<svg style="left:0;top:0;pointer-events:none" width="1920" height="910"><rect x="1592.00" y="366.80" width="214.60" height="30.20" fill="none" stroke="#ff0000" stroke-width="3.4"/></svg>
<svg class="gi" style="left:1596.500px;top:318px;stroke-width:1.3" width="19" height="19" viewBox="0 0 19 19"><rect x="6.900" y=".7" width="11.500" height="11.500" rx="2.300"/><path d="M4.600 6.400H3.300A2.300 2.300 0 0 0 1 8.700v6.400a2.300 2.300 0 0 0 2.300 2.300h6.600A2.300 2.300 0 0 0 12.200 15.100V14.200"/></svg>
<svg class="gi" style="left:1597px;top:372px;stroke-width:1.3" width="23" height="19" viewBox="0 0 23 19"><rect x=".8" y=".8" width="21" height="14.600" rx="2.600"/><path d="M3.800 17.600h12.200"/></svg>
<svg class="gi" style="left:1597px;top:426.5px" width="19" height="17" viewBox="0 0 19 17"><path d="M.6 3.6h2.6c4.4 0 5.6 9.6 10 9.6h4.4"/><path d="M.6 13.2h2.6c1.6 0 2.6-1.2 3.6-2.8M9.6 6.2c1-1.500 2-2.600 3.600-2.600h4.400"/><path d="M15.4 1.200l2.600 2.400-2.600 2.400M15.400 10.800l2.600 2.400-2.600 2.400"/></svg>
<svg class="gi" style="left:1597px;top:481px" width="19" height="17" viewBox="0 0 19 17"><path d="M.8 6.800 6.800 2.200 11.200 6.600 17.800.6"/><rect x="1.200" y="11.600" width="2.200" height="4" rx="1"/><rect x="5.800" y="9.400" width="2.200" height="6.200" rx="1"/><rect x="10.400" y="10.400" width="2.200" height="5.200" rx="1"/><rect x="15" y="8.800" width="2.200" height="6.800" rx="1"/></svg>
<svg class="gi" style="left:1596.500px;top:534.500px" width="15" height="18" viewBox="0 0 15 18"><path d="M7.400 17C5 14 .8 10.400.8 7A6.600 6.600 0 0 1 14 7c0 3.400-4.200 7-6.600 10z"/><circle cx="7.400" cy="6.800" r="2.400"/></svg>
<svg class="gi" style="left:1597px;top:588px" width="17" height="18" viewBox="0 0 17 18"><path d="M.8 3.600h15M5.400 3.400V2.200A1.400 1.400 0 0 1 6.800.8h3A1.400 1.400 0 0 1 11.200 2.200v1.200M2 3.800l1.400 12a1.600 1.600 0 0 0 1.600 1.400h6.600a1.600 1.600 0 0 0 1.600-1.400l1.400-12"/></svg>
<span class="t" style="left:1628.3px;top:319.0px;font-family:'DejaVu Sans','Liberation Sans',sans-serif;font-size:18px;color:#555555;letter-spacing:0.86px;">Clonar</span><span class="t" style="left:1628.7px;top:372.8px;font-family:'DejaVu Sans','Liberation Sans',sans-serif;font-size:18px;color:#555555;letter-spacing:0.66px;">Vincular pantallas</span><span class="t" style="left:1628.3px;top:426.8px;font-family:'DejaVu Sans','Liberation Sans',sans-serif;font-size:18px;color:#555555;letter-spacing:0.74px;">Ordenar aleatoriamente</span><span class="t" style="left:1627.3px;top:481.2px;font-family:'DejaVu Sans','Liberation Sans',sans-serif;font-size:18px;color:#555555;letter-spacing:0.77px;">Estadísticas de canal</span><span class="t" style="left:1619.4px;top:535.0px;font-family:'DejaVu Sans','Liberation Sans',sans-serif;font-size:18px;color:#555555;letter-spacing:0.65px;">Vincular a lugares</span><span class="t" style="left:1625.0px;top:589.4px;font-family:'DejaVu Sans','Liberation Sans',sans-serif;font-size:18px;color:#555555;letter-spacing:0.36px;">Eliminar</span>
</body></html>
